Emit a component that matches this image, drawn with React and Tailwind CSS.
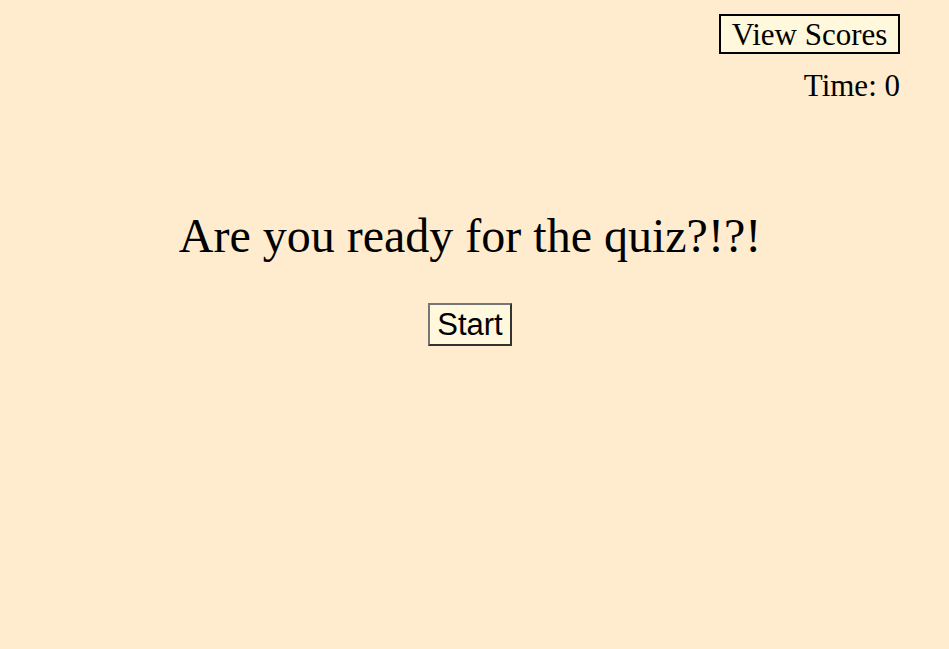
export default function App() {
  return (
    <div className="min-h-[649px] w-full bg-[#ffebcd] text-black" style={{ fontFamily: '"Liberation Serif", "Times New Roman", serif' }}>
      <div className="flex flex-col items-end pr-[49px] pt-[14px]">
        <button className="border-2 border-solid border-black bg-[#fff8dc] w-[181px] h-[40px] text-[31px] leading-[35px] font-['Liberation_Serif',serif]">
          View Scores
        </button>
        <div className="mt-[14px] text-[31px] leading-[36px]">Time: 0</div>
      </div>
      <div className="flex flex-col items-center pr-[9px] pt-[104px]">
        <h1 className="text-[48px] leading-[56px] font-normal">Are you ready for the quiz?!?!</h1>
        <button className="mt-[39px] h-[43px] w-[84px] border-2 border-t-[#767676] border-l-[#767676] border-b-[#333333] border-r-[#333333] bg-[#fff8dc] text-[31px] leading-[36px] font-['Liberation_Sans',Arial,sans-serif]">
          Start
        </button>
      </div>
    </div>
  );
}
